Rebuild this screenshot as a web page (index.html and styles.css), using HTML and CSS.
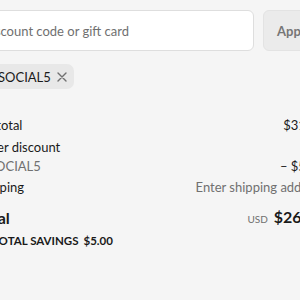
FILE: index.html
```html
<!DOCTYPE html>
<html>
<head>
<meta charset="utf-8">
<link rel="stylesheet" href="styles.css">
</head>
<body>
<div class="page">
  <div class="discount">
    <div class="field"><span class="placeholder">Discount code or gift card</span></div>
    <button class="apply">Apply</button>
  </div>
  <div class="chips">
    <span class="chip">
      <svg class="tag" width="14" height="14" viewBox="0 0 14 14"><path d="M7.5 1.5h5v5l-6 6-5-5z" fill="none" stroke="#555" stroke-width="1.3" stroke-linejoin="round"/><circle cx="10" cy="4" r="1" fill="#555"/></svg>
      <span class="chip-text">SOCIAL5</span>
      <svg class="x" width="10" height="10" viewBox="0 0 10 10"><path d="M1 1l8 8M9 1l-8 8" stroke="#707070" stroke-width="1.4" stroke-linecap="round"/></svg>
    </span>
  </div>
  <div class="summary">
    <div class="row">
      <span class="label">Subtotal</span>
      <span class="value">$31.00</span>
    </div>
    <div class="row bottom">
      <div class="stack">
        <span class="label">Order discount</span>
        <span class="code"><svg class="tag" width="14" height="14" viewBox="0 0 14 14"><path d="M7.5 1.5h5v5l-6 6-5-5z" fill="none" stroke="#707070" stroke-width="1.3" stroke-linejoin="round"/><circle cx="10" cy="4" r="1" fill="#707070"/></svg>SOCIAL5</span>
      </div>
      <span class="value">– $5.00</span>
    </div>
    <div class="row">
      <span class="label">Shipping</span>
      <span class="value muted">Enter shipping address</span>
    </div>
    <div class="row total">
      <span class="total-label">Total</span>
      <span class="total-value"><span class="currency">USD</span><span class="amount">$26.00</span></span>
    </div>
    <div class="savings">
      <svg class="tag" width="16" height="16" viewBox="0 0 14 14"><path d="M7.5 1.5h5v5l-6 6-5-5z" fill="none" stroke="#1a1a1a" stroke-width="1.3" stroke-linejoin="round"/><circle cx="10" cy="4" r="1" fill="#1a1a1a"/></svg>
      <span>TOTAL SAVINGS</span><span class="save-amt">$5.00</span>
    </div>
  </div>
</div>
</body>
</html>
```
FILE: styles.css
```css
html, body {
  margin: 0;
  padding: 0;
  background: #f5f5f5;
  overflow: hidden;
}
body {
  font-family: "Lato", "Liberation Sans", sans-serif;
  color: #1a1a1a;
  width: 300px;
  height: 300px;
}
.page {
  margin-left: -25px;
  width: 349px;
  padding-top: 10px;
}
.discount {
  display: flex;
  gap: 9px;
}
.field {
  width: 279px;
  height: 41px;
  box-sizing: border-box;
  background: #fff;
  border: 1px solid #dedede;
  border-radius: 6px;
  padding: 0 6px;
  display: flex;
  align-items: center;
}
.placeholder {
  color: #707070;
  font-size: 13px;
}
.apply {
  flex: 1;
  height: 41px;
  background: #ebebeb;
  border: 1px solid #e3e3e3;
  border-radius: 6px;
  font-family: inherit;
  font-size: 13px;
  font-weight: 700;
  color: #767676;
  text-align: left;
  padding: 0 0 0 13px;
}
.chips {
  margin-top: 13px;
  display: flex;
}
.chip {
  display: inline-flex;
  align-items: center;
  height: 25px;
  background: #e8e8e8;
  border-radius: 7px;
  padding: 0 7px 0 6px;
  gap: 3px;
}
.chip .x {
  margin-left: 3px;
}
.chip-text {
  font-size: 13px;
  color: #1a1a1a;
}
.summary {
  margin-top: 26px;
  display: flex;
  flex-direction: column;
  gap: 2px;
}
.row {
  display: flex;
  justify-content: space-between;
  align-items: center;
  font-size: 13px;
  line-height: 20px;
}
.row.bottom {
  align-items: flex-end;
}
.stack {
  display: flex;
  flex-direction: column;
}
.code {
  display: flex;
  align-items: center;
  gap: 2px;
  color: #707070;
  font-size: 13px;
  line-height: 18px;
}
.code .tag {
  margin-left: -3px;
}
.value {
  line-height: 18px;
}
.muted {
  color: #707070;
}
.row.total {
  margin-top: 5px;
  line-height: 26px;
}
.total-label {
  font-size: 16px;
  font-weight: 700;
}
.total-value {
  display: flex;
  align-items: baseline;
  gap: 6px;
}
.currency {
  font-size: 10px;
  color: #707070;
}
.amount {
  font-size: 16px;
  font-weight: 700;
}
.savings {
  display: flex;
  align-items: center;
  gap: 3px;
  font-size: 11.5px;
  font-weight: 700;
  line-height: 16px;
  margin-top: -1px;
}
.savings .tag {
  margin-left: -2px;
}
.save-amt {
  margin-left: 2px;
}
```
